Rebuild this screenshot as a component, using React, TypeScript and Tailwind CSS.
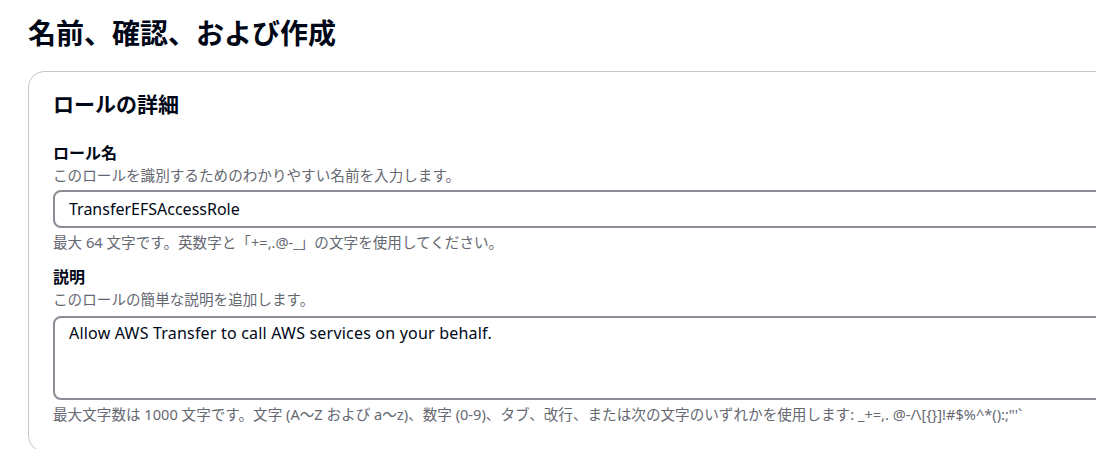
import React from 'react';

const font = "font-['Noto_Sans','Noto_Sans_CJK_JP',sans-serif]";

const Field: React.FC<{ label: string; description: string; hint: string; children: React.ReactNode; className?: string }> = ({
  label,
  description,
  hint,
  children,
  className,
}) => (
  <div className={className}>
    <div className="text-[16px] leading-[22px] font-bold text-[#000716]">{label}</div>
    <div className="text-[14.6px] leading-[22px] text-[#656871]">{description}</div>
    {children}
    <div className="mt-1 text-[14.6px] leading-[20px] text-[#656871] whitespace-nowrap">{hint}</div>
  </div>
);

const App: React.FC = () => {
  return (
    <div className={`w-[1096px] h-[449px] overflow-hidden bg-white pl-7 pt-[15px] ${font}`}>
      <h1 className="text-[28px] leading-[36px] font-bold text-[#000716]">名前、確認、および作成</h1>

      <div className="mt-5 w-[1120px] rounded-2xl border border-[#c6c6cd] pl-6 pr-6 pt-[18px] pb-[27px]">
        <h2 className="text-[21px] leading-[28px] font-bold text-[#000716]">ロールの詳細</h2>

        <Field
          className="mt-6"
          label="ロール名"
          description="このロールを識別するためのわかりやすい名前を入力します。"
          hint="最大 64 文字です。英数字と「+=,.@-_」の文字を使用してください。"
        >
          <input
            readOnly
            defaultValue="TransferEFSAccessRole"
            className="mt-1 block w-full h-[38px] rounded-lg border-2 border-[#8c8c94] px-[14px] text-[16px] text-[#000716] outline-none"
          />
        </Field>

        <Field
          className="mt-[14px]"
          label="説明"
          description="このロールの簡単な説明を追加します。"
          hint={'最大文字数は 1000 文字です。文字 (A～Z および a～z)、数字 (0-9)、タブ、改行、または次の文字のいずれかを使用します: _+=,. @-/\\[{}]!#$%^*():;"\'`'}
        >
          <textarea
            readOnly
            defaultValue="Allow AWS Transfer to call AWS services on your behalf."
            className="mt-[6px] block w-full h-[84px] resize-none rounded-lg border-2 border-[#8c8c94] px-[14px] py-1 text-[16px] leading-[22px] tracking-[0.2px] text-[#000716] outline-none"
          />
        </Field>
      </div>
    </div>
  );
};

export default App;
